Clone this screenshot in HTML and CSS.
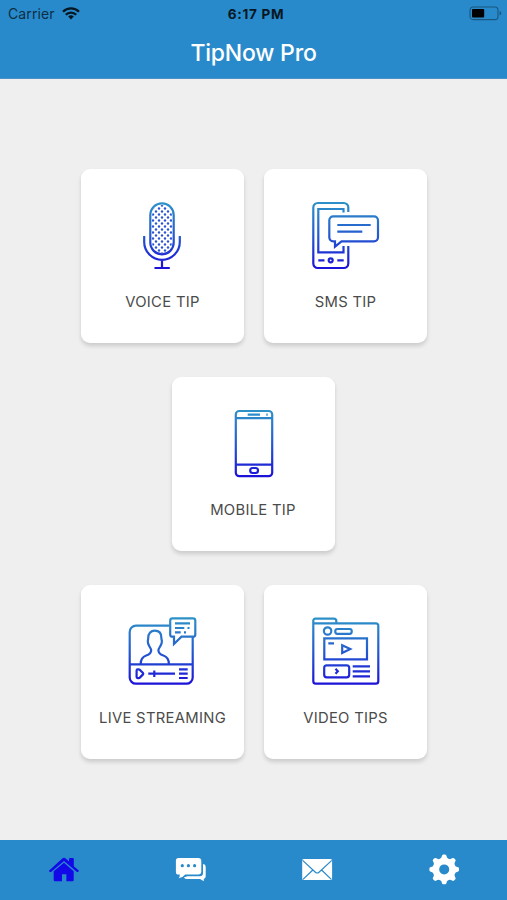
FILE: index.html
```html
<!DOCTYPE html>
<html lang="en">
<head>
<meta charset="utf-8">
<title>TipNow Pro</title>
<link rel="stylesheet" href="styles.css">
</head>
<body>
<svg class="defs" width="0" height="0" aria-hidden="true">
  <defs>
    <linearGradient id="ink" gradientUnits="userSpaceOnUse" x1="0" y1="2" x2="0" y2="68">
      <stop offset="0" stop-color="#2d91c8"/>
      <stop offset=".5" stop-color="#2459d0"/>
      <stop offset="1" stop-color="#1c10d8"/>
    </linearGradient>
    <pattern id="mesh" width="6" height="6" patternUnits="userSpaceOnUse" x="32" y="3">
      <circle cx="3" cy="1.5" r="1.2" fill="#2b55d4"/>
      <circle cx="0" cy="4.5" r="1.2" fill="#2b55d4"/>
      <circle cx="6" cy="4.5" r="1.2" fill="#2b55d4"/>
    </pattern>
  </defs>
</svg>
<header class="header">
  <div class="status">
    <div class="carrier">
      <span class="carrier-name">Carrier</span>
      <svg width="18" height="13" viewBox="0 0 18 13" fill="none" stroke="#061722" stroke-width="2.3">
        <path d="M1 4.8a11.2 11.2 0 0 1 16 0M3.8 7.8a7.2 7.2 0 0 1 10.4 0"/>
        <path d="M6.2 9.6a4 4 0 0 1 5.6 0L9 12.6z" fill="#061722" stroke="none"/>
      </svg>
    </div>
    <div class="time">6:17 PM</div>
    <svg class="battery" width="33" height="15" viewBox="0 0 33 15">
      <rect x="1" y="1" width="28" height="12.6" rx="3.2" fill="none" stroke="#1a567f" stroke-width="1.1"/>
      <rect x="3" y="3" width="12.2" height="8.6" rx="1" fill="#000"/>
      <path d="M30.6 5v4.6q1.6-.6 1.6-2.3T30.6 5z" fill="#1a567f"/>
    </svg>
  </div>
  <h1 class="title">TipNow Pro</h1>
</header>
<main class="menu">
  <div class="row">
    <a class="card">
      <svg class="icon" viewBox="0 0 71 70">
        <rect x="25" y="4" width="20" height="48" rx="10" class="mesh"/>
        <rect x="23.3" y="2.3" width="23.4" height="51" rx="11.7"/>
        <path d="M17.2 35v6a17.8 17.8 0 0 0 35.6 0v-6M35 58.5V67M27.5 67h15.3"/>
      </svg>
      <span class="label">VOICE TIP</span>
    </a>
    <a class="card">
      <svg class="icon" viewBox="0 0 71 70">
        <path d="M38.3 11V6.5A4.5 4.5 0 0 0 33.8 2h-26a4.5 4.5 0 0 0-4.5 4.5v56A4.5 4.5 0 0 0 7.8 67h26a4.5 4.5 0 0 0 4.5-4.5V45"/>
        <path d="M33.5 11.5V8H8.3v43.300h25.200V45"/>
        <path d="M23.3 15.3H64a4 4 0 0 1 4 4v17a4 4 0 0 1-4 4H31.500L25 45.600v-5.300h-1.700a4 4 0 0 1-4-4v-17a4 4 0 0 1 4-4z"/>
        <path d="M27.300 24h33.400M27.300 30.700h25M8.300 59.300h6.200M27.300 59.300h6.400"/>
        <circle cx="20.700" cy="59.300" r="2"/>
      </svg>
      <span class="label">SMS TIP</span>
    </a>
  </div>
  <div class="row row-middle">
    <a class="card">
      <svg class="icon" viewBox="0 0 71 70">
        <rect x="17.800" y="2" width="36.400" height="65.200" rx="3.500"/>
        <path d="M18 9.100h36M18 55.700h36M29.700 5.700H42M48.300 5.700h1.400"/>
        <rect x="32.200" y="59" width="7.800" height="5" rx="2.400"/>
      </svg>
      <span class="label">MOBILE TIP</span>
    </a>
  </div>
  <div class="row">
    <a class="card">
      <svg class="icon" viewBox="0 0 71 70">
        <path d="M42.500 8.700H9a6.300 6.300 0 0 0-6.300 6.300v45.400a6.300 6.300 0 0 0 6.300 6.300h50.400a6.300 6.300 0 0 0 6.300-6.300V20M2.700 47.300h63"/>
        <path d="M45.500 1.400H66a2.300 2.300 0 0 1 2.300 2.300v13.700a2.300 2.300 0 0 1-2.300 2.300H54.500L47 27v-7.300h-1.500a2.300 2.300 0 0 1-2.300-2.300V3.700a2.300 2.300 0 0 1 2.300-2.300z"/>
        <path d="M48 6.300h15M48 11h9.300M60.500 11h2M48 15.300h5.700M57 15.300h2"/>
        <path d="M13.700 47c0-5.500 2-7.300 5.500-8.500 4-1.300 5-2.500 5-5.200 0-1.500-1.200-2.800-2-4.300-.6-1.300-1.400-2.700-1.400-4.800 0-.9.400-1.500.4-3.200 0-4.300 2.300-7.300 6.600-7.300s6.600 3 6.600 7.300c0 1.700.5 2.300.5 3.200 0 2.100-.8 3.500-1.500 4.800-.8 1.500-2 2.800-2 4.300 0 2.700 1 3.900 5 5.200 3.500 1.200 5.500 3 5.500 8.500"/>
        <path d="M9.600 53.400v6.700q0 1 1 1h1q.7 0 1.200-.5l3.200-3.200q.6-.7 0-1.400l-3.200-3.100q-.5-.5-1.200-.5h-1q-1 0-1 1zM21.300 56.700H48M27.300 53.500v6.400M52 52.300h8.700M52 56.700h8.700M52 61h8.700"/>
      </svg>
      <span class="label">LIVE STREAMING</span>
    </a>
    <a class="card">
      <svg class="icon" viewBox="0 0 71 70">
        <path d="M3.300 6.300h62.500a2.500 2.500 0 0 1 2.500 2.500v55.400a2.500 2.500 0 0 1-2.500 2.500h-60a2.500 2.500 0 0 1-2.500-2.500V3.600a2 2 0 0 1 2-2h18.500a2.500 2.500 0 0 1 2.500 2.500v2"/>
        <circle cx="17.600" cy="14" r="3.700"/>
        <rect x="25.300" y="12" width="16.400" height="4.800" rx="2"/>
        <path d="M14.300 21.400H57v20.900H14.300zM18.300 26.300H24M32.200 28.300v7.600l8-3.800zM25.500 51.700l2.300 2.500-2.300 2.500M42.700 49.300H60M42.700 54.300H60M42.700 59.300H60"/>
        <rect x="14.200" y="48.300" width="25" height="12" rx="2.500"/>
      </svg>
      <span class="label">VIDEO TIPS</span>
    </a>
  </div>
</main>
<nav class="tabs">
  <a class="tab home">
    <svg width="40" height="40" viewBox="0 0 40 40">
      <path d="M21 12.800 10.700 21.300v8.700q0 1.300 1.300 1.300h7V24.300h4.400v7h6q1.300 0 1.300-1.300v-8.700z"/>
      <path d="M6.200 20.400q-.4.700.1 1.100l1 .6q.6.100 1-.3L21 11l12.700 10.800q.5.400 1 .3l.9-.7q.5-.5-.1-1.100l-4.700-4V9q0-.9-.9-.9H27q-.9 0-.9.900v2.500l-3.700-3.300q-1.400-1.100-2.800 0z"/>
    </svg>
  </a>
  <a class="tab">
    <svg width="40" height="40" viewBox="0 0 40 40">
      <path d="M8.500 8h19.800a3 3 0 0 1 3 3v10.500a3 3 0 0 1-3 3H15.300q-2.300 3-6.800 3.800 1.500-1.600 1.300-3.800H8.500a2.600 2.600 0 0 1-2.600-2.600V10.600A2.600 2.600 0 0 1 8.500 8z"/>
      <path d="M33 14q2.700.3 2.700 2.700v9.600q0 2.300-1.900 2.700-.2 1 .4 2-2.500-.3-4-1.900H17.300q-2.300 0-3.500-1.700l3.500-1.100h12.400q3.300 0 3.300-3.300z"/>
      <g fill="#288acb"><circle cx="12.300" cy="15.700" r="1.600"/><circle cx="18.400" cy="15.700" r="1.600"/><circle cx="24.600" cy="15.700" r="1.600"/></g>
    </svg>
  </a>
  <a class="tab">
    <svg width="40" height="40" viewBox="0 0 40 40">
      <rect x="5.200" y="9" width="29.900" height="21" rx="1.500"/>
      <path d="m5.600 10.400 12.800 11.800q1.800 1.600 3.600 0l12.800-11.800M6 29.400l9.800-9.400M34.300 29.400 24.600 20" fill="none" stroke="#288acb" stroke-width="1.200"/>
    </svg>
  </a>
  <a class="tab">
    <svg width="40" height="40" viewBox="0 0 40 40">
      <g transform="translate(20.200 19.400)">
        <path id="tooth" d="M-4.500-10.500q2-.8 2.200-2.800.2-1.500 1.400-1.500H.9q1.200 0 1.400 1.500.2 2 2.200 2.800V10.500q-2 .8-2.200 2.800-.2 1.500-1.400 1.500H-.9q-1.200 0-1.400-1.500-.2-2-2.200-2.800z"/>
        <use href="#tooth" transform="rotate(45)"/>
        <use href="#tooth" transform="rotate(90)"/>
        <use href="#tooth" transform="rotate(135)"/>
        <circle r="11"/>
        <circle r="5" fill="#288acb"/>
      </g>
    </svg>
  </a>
</nav>
</body>
</html>
```
FILE: styles.css
```css
* { box-sizing: border-box; }

body {
  margin: 0;
  height: 900px;
  display: flex;
  flex-direction: column;
  background: #efefef;
  font-family: Inter, "Liberation Sans", sans-serif;
  overflow: hidden;
}

.defs { position: absolute; }

.header {
  height: 79px;
  background: #288acb;
  border-bottom: 1px solid #4b93c6;
}

.status {
  height: 27px;
  padding: 0 5px 0 8px;
  display: grid;
  grid-template-columns: 1fr auto 1fr;
  align-items: center;
  color: #061722;
}

.carrier {
  display: flex;
  align-items: center;
  gap: 7px;
}

.carrier-name {
  font-size: 14px;
  line-height: 27px;
  letter-spacing: 0.1px;
  color: #0d2e45;
}

.time {
  padding-left: 2px;
  font-size: 13.5px;
  font-weight: 700;
  letter-spacing: 0.75px;
}

.battery { justify-self: end; }

.title {
  margin: 0;
  padding-top: 11px;
  text-align: center;
  font-size: 23px;
  line-height: 30px;
  font-weight: 500;
  letter-spacing: -0.2px;
  color: #fff;
}

.menu {
  flex: 1;
  padding-top: 90px;
  display: flex;
  flex-direction: column;
  gap: 34px;
}

.row {
  display: flex;
  justify-content: center;
  gap: 20px;
  padding-left: 1px;
}

.row-middle { padding: 0 1px 0 0; }

.card {
  width: 163px;
  height: 174px;
  padding-top: 32px;
  display: flex;
  flex-direction: column;
  align-items: center;
  background: #fff;
  border-radius: 9px;
  box-shadow: 0 3px 4px rgba(0, 0, 0, 0.15);
}

.icon {
  width: 71px;
  height: 70px;
  fill: none;
  stroke: url(#ink);
  stroke-width: 2.2;
}

.mesh {
  fill: url(#mesh);
  stroke: none;
}

.label {
  margin-top: 20.5px;
  font-size: 14.8px;
  line-height: 20px;
  letter-spacing: 0.3px;
  white-space: nowrap;
  color: #4b4b4b;
}

.tabs {
  height: 60px;
  display: grid;
  grid-template-columns: repeat(4, 1fr);
  background: #288acb;
}

.tab {
  display: flex;
  justify-content: center;
  align-items: center;
  fill: #fff;
}

.home { fill: #1208e8; }
```
